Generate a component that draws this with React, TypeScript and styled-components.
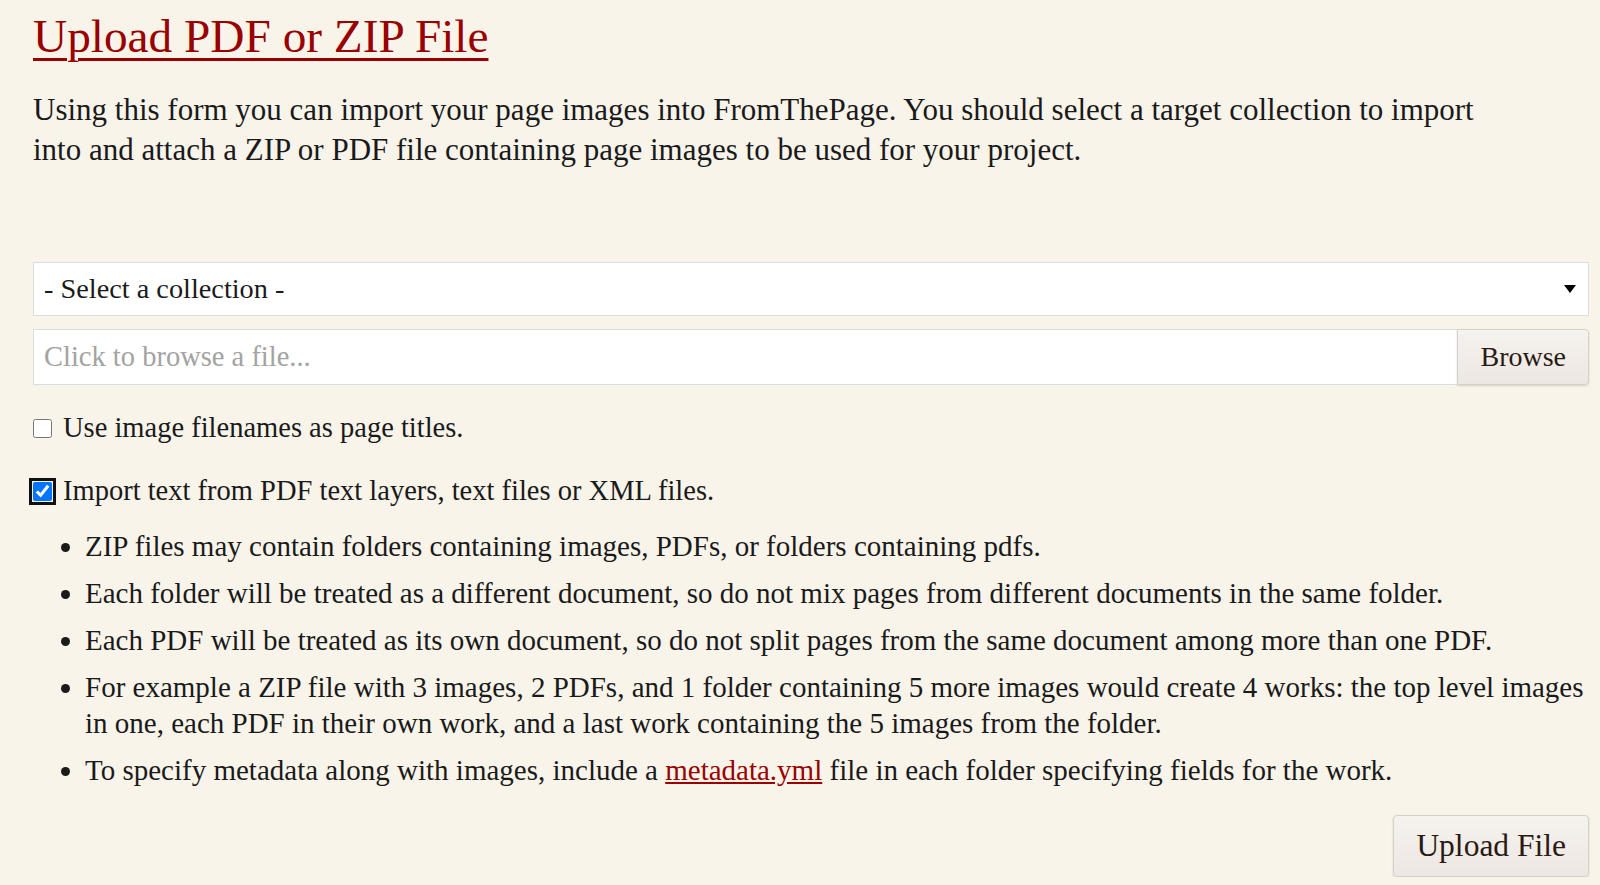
import React from 'react'
import styled, { createGlobalStyle } from 'styled-components'

const GlobalStyle = createGlobalStyle`
  html, body {
    margin: 0;
    padding: 0;
    background: #f9f4ea;
  }
  body {
    font-family: "Liberation Serif", "DejaVu Serif", serif;
    color: #1a1a1a;
  }
`

const Page = styled.div`
  padding: 0 11px 0 33px;
`

const Title = styled.h1`
  margin: 0;
  padding-top: 8px;
  font-size: 47.3px;
  font-weight: 400;
  line-height: 56px;
  color: #990000;
  text-decoration: underline;
  text-decoration-thickness: 3px;
  text-underline-offset: 6px;
`

const Intro = styled.p`
  margin: 26px 0 0;
  font-size: 31px;
  line-height: 40px;
  max-width: 1480px;
`

const Form = styled.form`
  margin-top: 92px;
  display: flex;
  flex-direction: column;
`

const SelectBox = styled.div`
  position: relative;
  height: 54px;
  background: #fff;
  border: 1px solid #ddd;
  box-sizing: border-box;
  display: flex;
  align-items: center;
  padding: 0 10px;
  font-size: 28.3px;
`

const Caret = styled.span`
  position: absolute;
  right: 12px;
  top: 50%;
  margin-top: -4px;
  width: 0;
  height: 0;
  border-left: 6px solid transparent;
  border-right: 6px solid transparent;
  border-top: 8px solid #000;
`

const FileRow = styled.div`
  margin-top: 13px;
  display: flex;
  height: 56px;
`

const FileField = styled.div`
  flex: 1;
  background: #fff;
  border: 1px solid #ddd;
  border-right: none;
  box-sizing: border-box;
  display: flex;
  align-items: center;
  padding: 0 10px;
  font-size: 28.5px;
  color: #a3a3a3;
`

const Button = styled.button<{ $big?: boolean }>`
  font-family: inherit;
  font-size: ${p => (p.$big ? '31.5px' : '28px')};
  color: #2a1a14;
  background: linear-gradient(#f6f2ee, #ede7e2);
  border: 1px solid #d6d0cb;
  border-radius: ${p => (p.$big ? '4px' : '0 4px 4px 0')};
  box-shadow: 0 1px 2px rgba(0, 0, 0, 0.15);
  padding: 0 22px;
  height: ${p => (p.$big ? '62px' : '56px')};
  cursor: pointer;
`

const CheckRow = styled.label<{ $gap: number }>`
  margin-top: ${p => p.$gap}px;
  display: flex;
  align-items: center;
  gap: 11px;
  font-size: 28.5px;
  line-height: 36px;
`

const Check = styled.input`
  margin: 0;
  width: 19px;
  height: 19px;
  accent-color: #0075ff;
  &:checked {
    outline: 3px solid #111;
    outline-offset: 1px;
    border-radius: 3px;
  }
`

const Notes = styled.ul`
  margin: 19px 0 0;
  padding-left: 52px;
  font-size: 29px;
  line-height: 36px;
`

const Note = styled.li`
  margin-bottom: 11px;
`

const Link = styled.a`
  color: #990000;
  text-decoration: underline;
`

const Actions = styled.div`
  margin-top: 16px;
  display: flex;
  justify-content: flex-end;
`

export default function App() {
  return (
    <Page>
      <GlobalStyle />
      <Title>Upload PDF or ZIP File</Title>
      <Intro>
        Using this form you can import your page images into FromThePage. You should select a target collection to import
        into and attach a ZIP or PDF file containing page images to be used for your project.
      </Intro>
      <Form onSubmit={e => e.preventDefault()}>
        <SelectBox>
          - Select a collection -
          <Caret />
        </SelectBox>
        <FileRow>
          <FileField>Click to browse a file...</FileField>
          <Button type="button">Browse</Button>
        </FileRow>
        <CheckRow $gap={25}>
          <Check type="checkbox" />
          Use image filenames as page titles.
        </CheckRow>
        <CheckRow $gap={27}>
          <Check type="checkbox" defaultChecked />
          Import text from PDF text layers, text files or XML files.
        </CheckRow>
        <Notes>
          <Note>ZIP files may contain folders containing images, PDFs, or folders containing pdfs.</Note>
          <Note>Each folder will be treated as a different document, so do not mix pages from different documents in the same folder.</Note>
          <Note>Each PDF will be treated as its own document, so do not split pages from the same document among more than one PDF.</Note>
          <Note>
            For example a ZIP file with 3 images, 2 PDFs, and 1 folder containing 5 more images would create 4 works: the top level images
            in one, each PDF in their own work, and a last work containing the 5 images from the folder.
          </Note>
          <Note>
            To specify metadata along with images, include a <Link href="#">metadata.yml</Link> file in each folder specifying fields for the work.
          </Note>
        </Notes>
        <Actions>
          <Button type="submit" $big>Upload File</Button>
        </Actions>
      </Form>
    </Page>
  )
}
